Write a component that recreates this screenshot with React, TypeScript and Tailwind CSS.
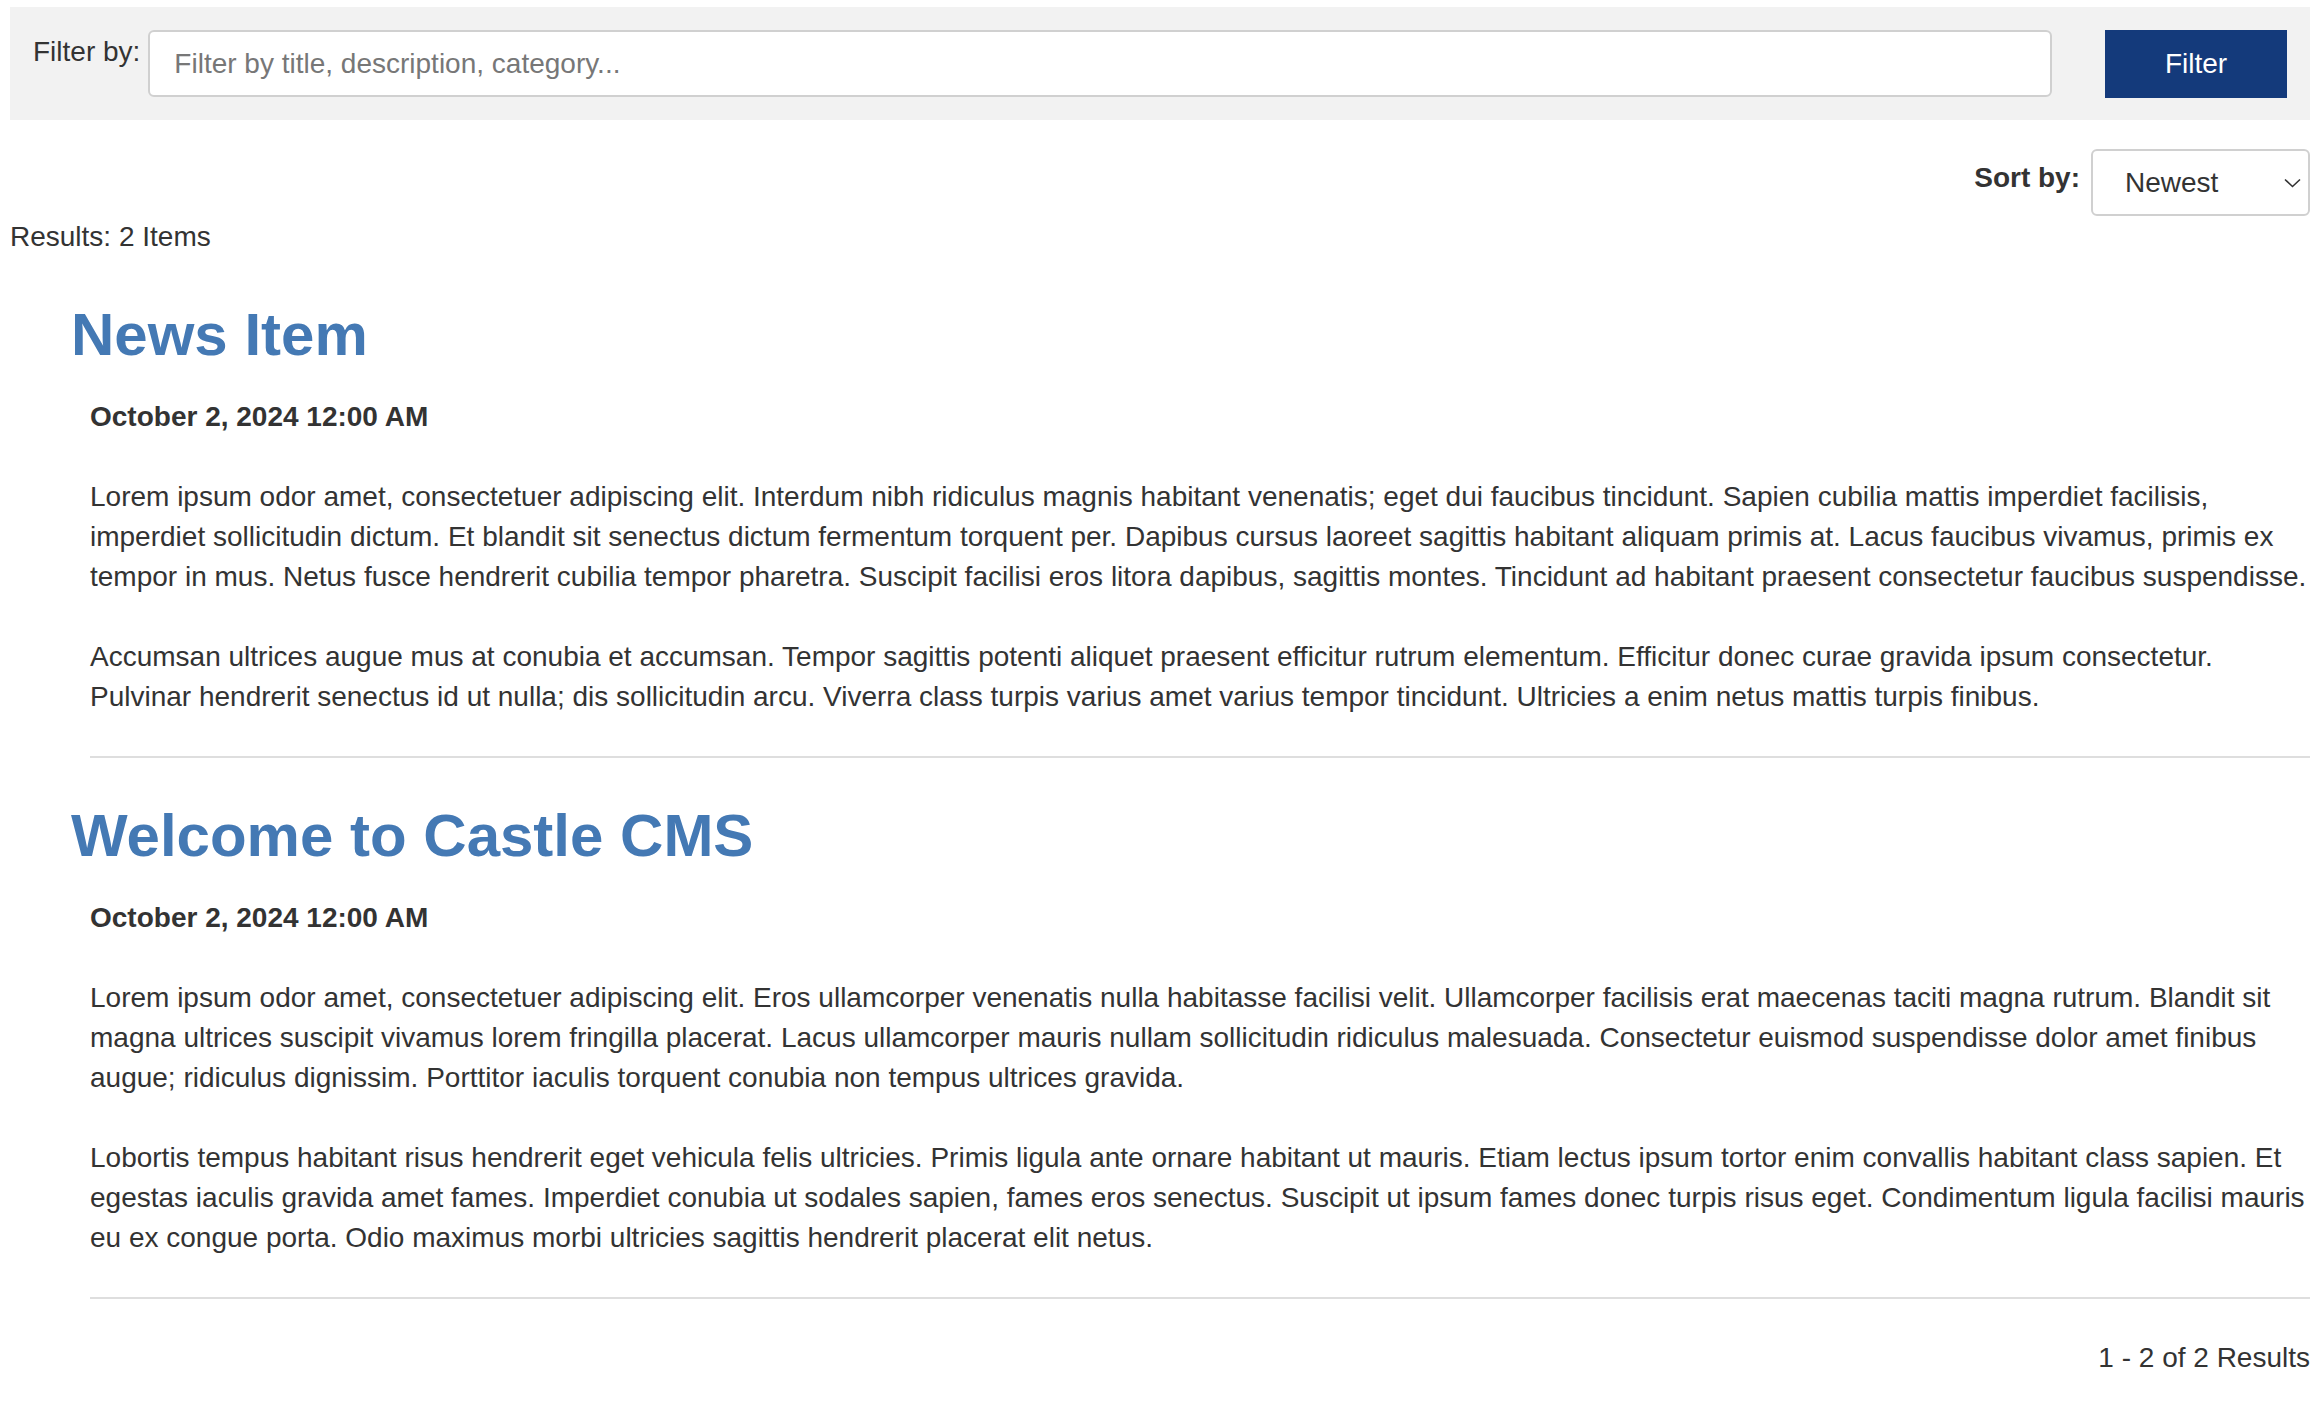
const articles = [
  {
    title: "News Item",
    date: "October 2, 2024 12:00 AM",
    paragraphs: [
      "Lorem ipsum odor amet, consectetuer adipiscing elit. Interdum nibh ridiculus magnis habitant venenatis; eget dui faucibus tincidunt. Sapien cubilia mattis imperdiet facilisis, imperdiet sollicitudin dictum. Et blandit sit senectus dictum fermentum torquent per. Dapibus cursus laoreet sagittis habitant aliquam primis at. Lacus faucibus vivamus, primis ex tempor in mus. Netus fusce hendrerit cubilia tempor pharetra. Suscipit facilisi eros litora dapibus, sagittis montes. Tincidunt ad habitant praesent consectetur faucibus suspendisse.",
      "Accumsan ultrices augue mus at conubia et accumsan. Tempor sagittis potenti aliquet praesent efficitur rutrum elementum. Efficitur donec curae gravida ipsum consectetur. Pulvinar hendrerit senectus id ut nulla; dis sollicitudin arcu. Viverra class turpis varius amet varius tempor tincidunt. Ultricies a enim netus mattis turpis finibus.",
    ],
  },
  {
    title: "Welcome to Castle CMS",
    date: "October 2, 2024 12:00 AM",
    paragraphs: [
      "Lorem ipsum odor amet, consectetuer adipiscing elit. Eros ullamcorper venenatis nulla habitasse facilisi velit. Ullamcorper facilisis erat maecenas taciti magna rutrum. Blandit sit magna ultrices suscipit vivamus lorem fringilla placerat. Lacus ullamcorper mauris nullam sollicitudin ridiculus malesuada. Consectetur euismod suspendisse dolor amet finibus augue; ridiculus dignissim. Porttitor iaculis torquent conubia non tempus ultrices gravida.",
      "Lobortis tempus habitant risus hendrerit eget vehicula felis ultricies. Primis ligula ante ornare habitant ut mauris. Etiam lectus ipsum tortor enim convallis habitant class sapien. Et egestas iaculis gravida amet fames. Imperdiet conubia ut sodales sapien, fames eros senectus. Suscipit ut ipsum fames donec turpis risus eget. Condimentum ligula facilisi mauris eu ex congue porta. Odio maximus morbi ultricies sagittis hendrerit placerat elit netus.",
    ],
  },
];

export default function App() {
  return (
    <div className="min-h-screen bg-white px-[10px] pt-[7px] font-['Liberation_Sans',Arial,sans-serif] text-[28px] leading-[40px] text-[#333]">
      {/* Filter bar */}
      <div className="flex h-[113px] items-start bg-[#f2f2f2] pl-[23px] pr-[23px] pt-[23px]">
        <label className="mt-[2px] mr-[8px] whitespace-nowrap">Filter by:</label>
        <input
          type="text"
          placeholder="Filter by title, description, category..."
          className="h-[67px] flex-1 rounded-[6px] border-2 border-[#d0d0d0] bg-white pl-[24px] text-[28px] text-[#333] outline-none placeholder:text-[#777]"
        />
        <button className="ml-[53px] h-[68px] w-[182px] bg-[#143a7b] text-[28px] text-white">
          Filter
        </button>
      </div>

      {/* Sort */}
      <div className="mt-[29px] flex items-start justify-end">
        <span className="mt-[9px] mr-[11px] font-bold">Sort by:</span>
        <div className="relative">
          <select className="h-[67px] w-[219px] appearance-none rounded-[6px] border-2 border-[#d0d0d0] bg-white pl-[32px] text-[28px] text-[#333] outline-none">
            <option>Newest</option>
            <option>Oldest</option>
          </select>
          <svg
            className="pointer-events-none absolute right-[9px] top-[29px]"
            width="17"
            height="10"
            viewBox="0 0 17 10"
            fill="none"
          >
            <path d="M1 1.5l7.5 7 7.5-7" stroke="#333" strokeWidth="1.6" />
          </svg>
        </div>
      </div>

      <div className="mt-[1px]">Results: 2 Items</div>

      {/* Items */}
      {articles.map((a) => (
        <div key={a.title}>
          <h2 className="ml-[61px] mt-[46px] text-[60px] font-bold leading-[64px] text-[#4479b4]">
            {a.title}
          </h2>
          <div className="ml-[80px]">
            <div className="mt-[30px] font-bold">{a.date}</div>
            {a.paragraphs.map((p, i) => (
              <p key={i} className="mt-[40px]">
                {p}
              </p>
            ))}
            <hr className="mt-[39px] border-t-2 border-[#dedede]" />
          </div>
        </div>
      ))}

      <div className="mt-[39px] text-right">1 - 2 of 2 Results</div>
    </div>
  );
}
